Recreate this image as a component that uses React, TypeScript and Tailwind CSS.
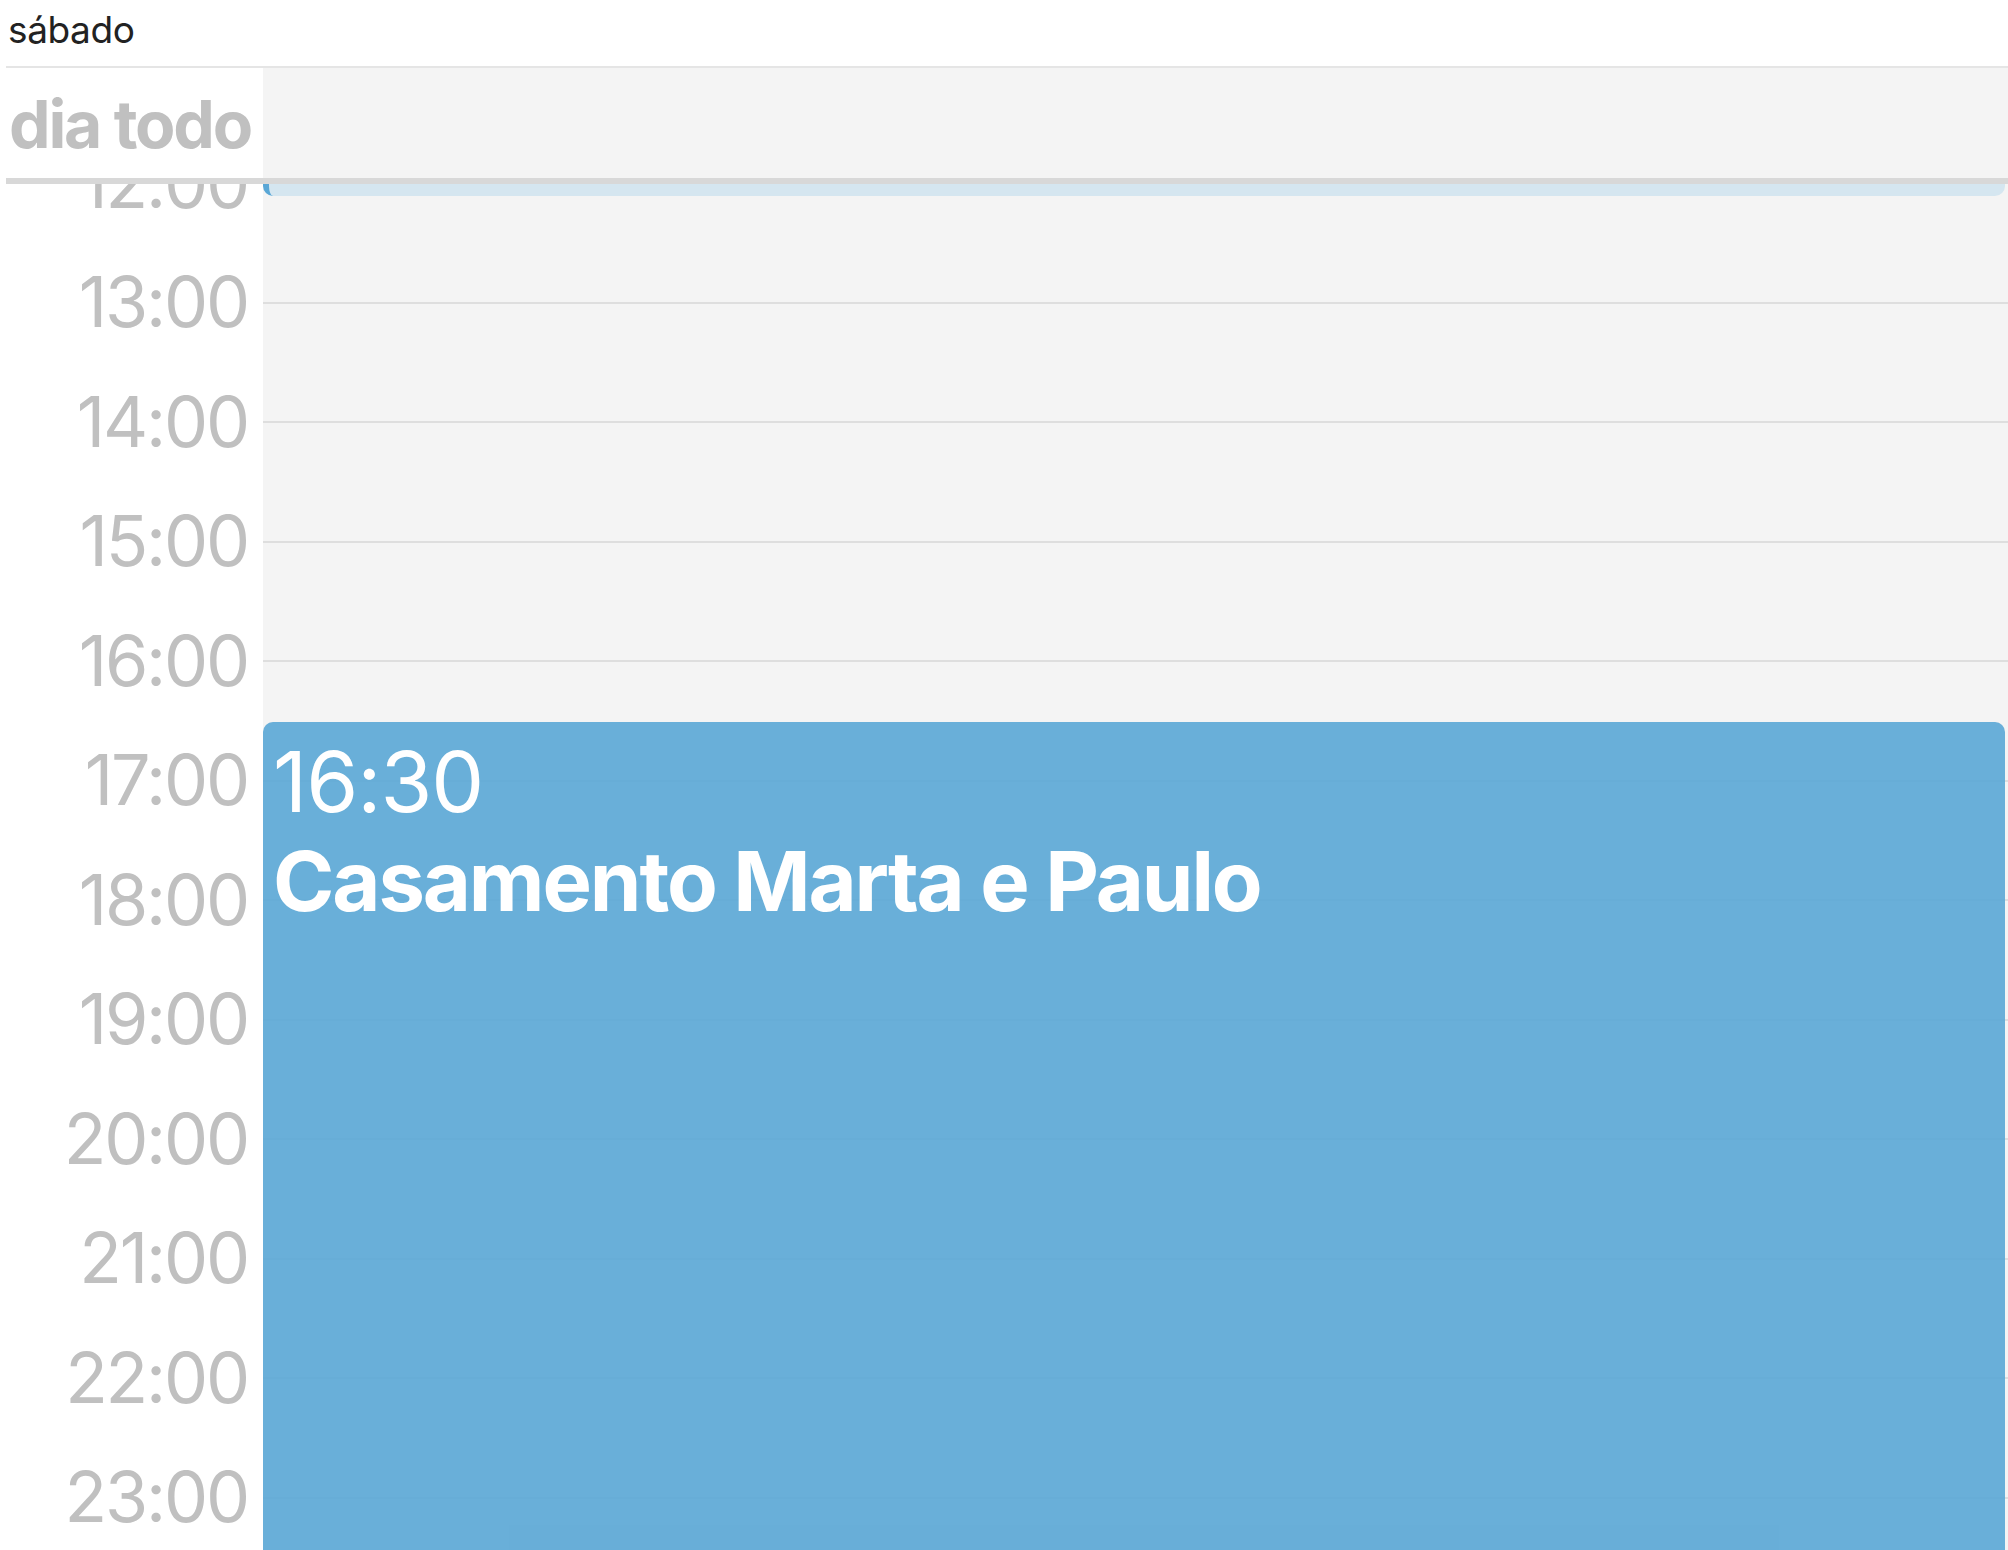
import React from "react";

const hours = [
  "12:00",
  "13:00",
  "14:00",
  "15:00",
  "16:00",
  "17:00",
  "18:00",
  "19:00",
  "20:00",
  "21:00",
  "22:00",
  "23:00",
];

const font = { fontFamily: "Inter, 'Noto Sans', sans-serif" };

export default function App() {
  return (
    <div
      className="flex h-[1550px] w-full flex-col overflow-hidden bg-white pl-[6px]"
      style={font}
    >
      {/* day header */}
      <div className="h-[66px] shrink-0 pl-[2px] pt-[8px] text-[37px] leading-[44px] tracking-[-0.4px] text-[#222]">
        sábado
      </div>
      <div className="h-[2px] shrink-0 bg-[#e5e5e5]" />

      {/* all-day row */}
      <div className="flex h-[110px] shrink-0">
        <div className="w-[257px] shrink-0 pl-[3px] pt-[16px] text-[66px] font-bold leading-[80px] tracking-[-2.2px] text-[#c0c0c0]">
          dia todo
        </div>
        <div className="flex-1 bg-[#f4f4f4]" />
      </div>
      <div className="h-[6px] shrink-0 bg-[#d8d8d8]" />

      {/* hour grid */}
      <div className="flex min-h-0 flex-1 overflow-hidden">
        <div className="-mt-[61px] w-[257px] shrink-0">
          {hours.map((h) => (
            <div
              key={h}
              className="flex h-[119.5px] items-center justify-end pr-[15px] text-[70px] leading-none tracking-[-2.2px] text-[#c0c0c0]"
            >
              {h}
            </div>
          ))}
        </div>

        <div className="relative flex-1 bg-[#f4f4f4]">
          <div className="-mt-[2px]">
            {hours.map((h) => (
              <div key={h} className="h-[119.5px] border-t-2 border-[#dedede]" />
            ))}
          </div>

          {/* tail of an earlier event */}
          <div className="absolute -top-[40px] left-0 right-[3px] h-[52px] rounded-b-[10px] border-l-[6px] border-[#5aa7d6] bg-[#d5e6f0]" />

          {/* event */}
          <div className="absolute bottom-0 left-0 right-[3px] top-[538px] rounded-t-[10px] bg-[rgba(92,168,214,0.92)] pl-[10px] pt-[18px] text-white">
            <div className="text-[84px] leading-none tracking-[-1px]">16:30</div>
            <div className="mt-[16px] text-[83px] font-bold leading-none tracking-[-2.1px]">
              Casamento Marta e Paulo
            </div>
          </div>
        </div>
      </div>
    </div>
  );
}
